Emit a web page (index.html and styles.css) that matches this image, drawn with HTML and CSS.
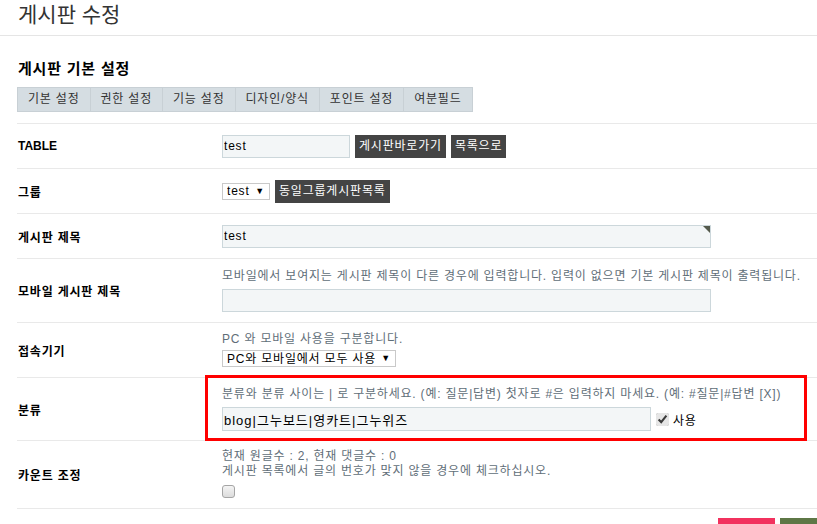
FILE: index.html
```html
<!DOCTYPE html>
<html lang="ko">
<head>
    <meta charset="UTF-8">
    <meta name="viewport" content="width=device-width, initial-scale=1.0">
    <title>게시판 수정</title>
    <link rel="stylesheet" href="styles.css">
</head>
<body>
    <div class="page-head">
        <h1>게시판 수정</h1>
    </div>

    <div class="content">
        <h2>게시판 기본 설정</h2>
        <ul class="tabs">
            <li>기본 설정</li>
            <li>권한 설정</li>
            <li>기능 설정</li>
            <li>디자인/양식</li>
            <li>포인트 설정</li>
            <li>여분필드</li>
        </ul>

        <div class="frm">
            <div class="row">
                <div class="th th-latin">TABLE</div>
                <div class="td">
                    <input type="text" class="inp inp-table" value="test">
                    <a href="#" class="btn">게시판바로가기</a>
                    <a href="#" class="btn">목록으로</a>
                </div>
            </div>

            <div class="row">
                <div class="th">그룹</div>
                <div class="td">
                    <span class="sel sel-sm"><select><option>test</option></select></span>
                    <a href="#" class="btn">동일그룹게시판목록</a>
                </div>
            </div>

            <div class="row">
                <div class="th">게시판 제목</div>
                <div class="td">
                    <span class="required"><input type="text" class="inp inp-wide" value="test"></span>
                </div>
            </div>

            <div class="row">
                <div class="th">모바일 게시판 제목</div>
                <div class="td stack">
                    <span class="help">모바일에서 보여지는 게시판 제목이 다른 경우에 입력합니다. 입력이 없으면 기본 게시판 제목이 출력됩니다.</span>
                    <input type="text" class="inp inp-wide">
                </div>
            </div>

            <div class="row">
                <div class="th">접속기기</div>
                <div class="td stack stack-tight">
                    <span class="help">PC 와 모바일 사용을 구분합니다.</span>
                    <span class="sel sel-md"><select><option>PC와 모바일에서 모두 사용</option></select></span>
                </div>
            </div>

            <div class="row">
                <div class="th">분류</div>
                <div class="td">
                    <div class="mark">
                        <span class="help">분류와 분류 사이는 | 로 구분하세요. (예: 질문|답변) 첫자로 #은 입력하지 마세요. (예: #질문|#답변 [X])</span>
                        <div class="line">
                            <input type="text" class="inp inp-cate" value="blog|그누보드|영카트|그누위즈">
                            <label class="chk"><input type="checkbox" checked> 사용</label>
                        </div>
                    </div>
                </div>
            </div>

            <div class="row">
                <div class="th">카운트 조정</div>
                <div class="td stack stack-count">
                    <span class="help">현재 원글수 : 2, 현재 댓글수 : 0<br>게시판 목록에서 글의 번호가 맞지 않을 경우에 체크하십시오.</span>
                    <input type="checkbox" class="chk-box">
                </div>
            </div>
        </div>

        <div class="btns">
            <button class="btn-submit" aria-label="확인"></button>
            <button class="btn-list" aria-label="목록"></button>
        </div>
    </div>
</body>
</html>
```

FILE: styles.css
```css
html, body {
    margin: 0;
    padding: 0;
    overflow: hidden;
}
body {
    font-family: "Liberation Sans", "Noto Sans CJK KR", sans-serif;
    font-size: 12px;
    letter-spacing: 0.8px;
    color: #333;
    background-color: #fff;
}
.page-head {
    height: 35px;
    border-bottom: 1px solid #e5e5e5;
}
.page-head h1 {
    margin: 0;
    padding-left: 18px;
    font-size: 21px;
    font-weight: normal;
    line-height: 30px;
    letter-spacing: 0;
    color: #333;
}
.content {
    width: 830px;
    margin-left: 17px;
}
h2 {
    margin: 23px 0 8px 1px;
    font-size: 15px;
    line-height: 20px;
    color: #000;
}
.tabs {
    display: flex;
    margin: 0 0 11px 0;
    padding: 0;
    list-style: none;
}
.tabs li {
    height: 23px;
    line-height: 23px;
    padding: 0 10px;
    border: 1px solid #c8d0d5;
    margin-right: -1px;
    background-color: #d5dde2;
    color: #333;
}
/* form table */
.frm {
    border-top: 1px solid #e9e9e9;
}
.row {
    display: grid;
    grid-template-columns: 205px 1fr;
    min-height: 44px;
    border-bottom: 1px solid #e9e9e9;
}
.th {
    display: flex;
    align-items: center;
    padding-left: 1px;
    font-weight: bold;
    color: #000;
}
.th-latin {
    letter-spacing: 0;
}
.td {
    display: flex;
    align-items: center;
    gap: 5px;
}
.td.stack {
    flex-direction: column;
    align-items: flex-start;
    gap: 5px;
    padding: 9px 0 10px;
}
.td.stack-tight {
    gap: 3px;
    padding: 8px 0 10px;
}
.td.stack-count {
    gap: 6px;
    padding: 8px 0 10px;
}
.help {
    line-height: 16px;
    color: #5f6e78;
}
.stack-count .help {
    line-height: 15px;
}
.inp {
    box-sizing: border-box;
    height: 23px;
    padding: 0 1px;
    border: 1px solid #ccd7db;
    background-color: #f3f6f7;
    font-family: inherit;
    font-size: 12px;
    letter-spacing: 0.8px;
    color: #000;
}
.inp-table {
    width: 128px;
}
.inp-wide {
    width: 489px;
}
.inp-cate {
    width: 429px;
    height: 24px;
    letter-spacing: 1px;
    font-size: 13px;
}
.required {
    position: relative;
    display: inline-block;
    line-height: 0;
}
.required::after {
    content: "";
    position: absolute;
    top: 1px;
    right: 1px;
    border-top: 7px solid #555a4c;
    border-left: 7px solid transparent;
}
.btn {
    display: inline-block;
    height: 23px;
    line-height: 23px;
    padding: 0 4px;
    background-color: #444;
    color: #fff;
    text-decoration: none;
}
.sel {
    position: relative;
    display: inline-block;
    line-height: 0;
}
.sel select {
    -webkit-appearance: none;
    appearance: none;
    box-sizing: border-box;
    height: 17px;
    padding: 0 16px 0 4px;
    border: 1px solid #c9c9c9;
    border-radius: 0;
    background-color: #fff;
    font-family: inherit;
    font-size: 12px;
    letter-spacing: 0.8px;
    color: #000;
}
.sel::after {
    content: "\25BC";
    position: absolute;
    right: 5px;
    top: 4px;
    font-size: 9px;
    line-height: 9px;
    color: #000;
    pointer-events: none;
}
.sel-sm select {
    width: 48px;
}
.sel-md select {
    width: 174px;
}
/* red highlight box */
.mark {
    box-sizing: border-box;
    width: 602px;
    margin: -3px 0 -1px -17px;
    padding: 8px 0 7px 14px;
    border: 3px solid #f00;
}
.mark .help {
    display: block;
    margin-bottom: 5px;
    white-space: nowrap;
}
.mark .line {
    display: flex;
    align-items: center;
    gap: 5px;
}
.chk {
    display: flex;
    align-items: center;
    gap: 4px;
    font-size: 12px;
    color: #000;
}
.chk input {
    width: 13px;
    height: 13px;
    margin: 0;
    accent-color: #e6e6e6;
}
.chk-box {
    -webkit-appearance: none;
    appearance: none;
    box-sizing: border-box;
    width: 13px;
    height: 13px;
    margin: 0;
    border: 1px solid #a5a5a5;
    border-radius: 3px;
    background: linear-gradient(#f4f4f4, #dcdcdc);
}
.btns {
    display: flex;
    justify-content: flex-end;
    gap: 5px;
    margin-top: 9px;
    padding-right: 10px;
}
.btns button {
    width: 57px;
    height: 30px;
    border: none;
}
.btn-submit {
    background-color: #f2315e;
}
.btn-list {
    background-color: #5e7746;
}
```
